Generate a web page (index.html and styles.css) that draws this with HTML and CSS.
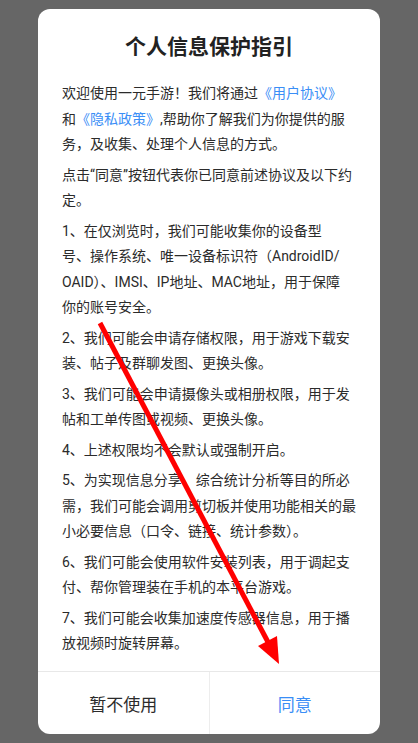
FILE: index.html
```html
<!DOCTYPE html>
<html lang="zh-CN">
<head>
  <meta charset="UTF-8">
  <title>个人信息保护指引</title>
  <meta name="viewport" content="width=device-width, initial-scale=1.0">
  <link rel="stylesheet" href="styles.css">
</head>
<body>
  <div class="dialog">
    <h1 class="dialog-title">个人信息保护指引</h1>

    <div class="dialog-body">
      <p>欢迎使用一元手游！我们将通过<a href="#">《用户协议》</a><br>和<a href="#">《隐私政策》</a>,帮助你了解我们为你提供的服<br>务，及收集、处理个人信息的方式。</p>
      <p>点击“同意”按钮代表你已同意前述协议及以下约<br>定。</p>
      <p>1、在仅浏览时，我们可能收集你的设备型<br>号、操作系统、唯一设备标识符（AndroidID/<br>OAID）、IMSI、IP地址、MAC地址，用于保障<br>你的账号安全。</p>
      <p>2、我们可能会申请存储权限，用于游戏下载安<br>装、帖子及群聊发图、更换头像。</p>
      <p>3、我们可能会申请摄像头或相册权限，用于发<br>帖和工单传图或视频、更换头像。</p>
      <p>4、上述权限均不会默认或强制开启。</p>
      <p>5、为实现信息分享、综合统计分析等目的所必<br>需，我们可能会调用剪切板并使用功能相关的最<br>小必要信息（口令、链接、统计参数）。</p>
      <p>6、我们可能会使用软件安装列表，用于调起支<br>付、帮你管理装在手机的本平台游戏。</p>
      <p>7、我们可能会收集加速度传感器信息，用于播<br>放视频时旋转屏幕。</p>
    </div>

    <div class="dialog-footer">
      <button type="button" class="btn btn-cancel">暂不使用</button>
      <button type="button" class="btn btn-ok">同意</button>
    </div>
  </div>

  <!-- 标注箭头 -->
  <svg class="arrow" width="418" height="743" viewBox="0 0 418 743">
    <line x1="100" y1="323" x2="269" y2="644" stroke="#ff0000" stroke-width="5" />
    <polygon points="279,664 258,646 277,636" fill="#ff0000" />
  </svg>
</body>
</html>
```

FILE: styles.css
```css
body {
  margin: 0;
  padding: 0;
  background: #666666;
  font-family: Roboto, "Noto Sans CJK SC", sans-serif;
  width: 418px;
  height: 743px;
  overflow: hidden;
}
.dialog {
  margin: 9px 0 0 38px;
  width: 342px;
  height: 725px;
  background: #fff;
  border-radius: 12px;
  display: flex;
  flex-direction: column;
  overflow: hidden;
}
.dialog-title {
  margin: 0;
  padding-top: 23px;
  font-size: 21px;
  line-height: 30px;
  font-weight: bold;
  color: #222;
  text-align: center;
}
.dialog-body {
  flex: 1;
  padding: 19px 24px 0;
  overflow: hidden;
}
.dialog-body p {
  margin: 0 0 5px;
  font-size: 14px;
  line-height: 25.5px;
  color: #2b2b2b;
  white-space: nowrap;
}
.dialog-body a {
  color: #3a8ef6;
  text-decoration: none;
}
.dialog-footer {
  height: 62px;
  border-top: 1px solid #e8e8e8;
  display: flex;
}
.btn {
  flex: 1;
  border: none;
  background: transparent;
  font-family: inherit;
  font-size: 17px;
  padding: 0;
  cursor: pointer;
}
.btn-cancel {
  color: #2b2b2b;
  border-right: 1px solid #ededed;
}
.btn-ok {
  color: #3a8ef6;
}
.arrow {
  position: absolute;
  left: 0;
  top: 0;
  pointer-events: none;
}
```
